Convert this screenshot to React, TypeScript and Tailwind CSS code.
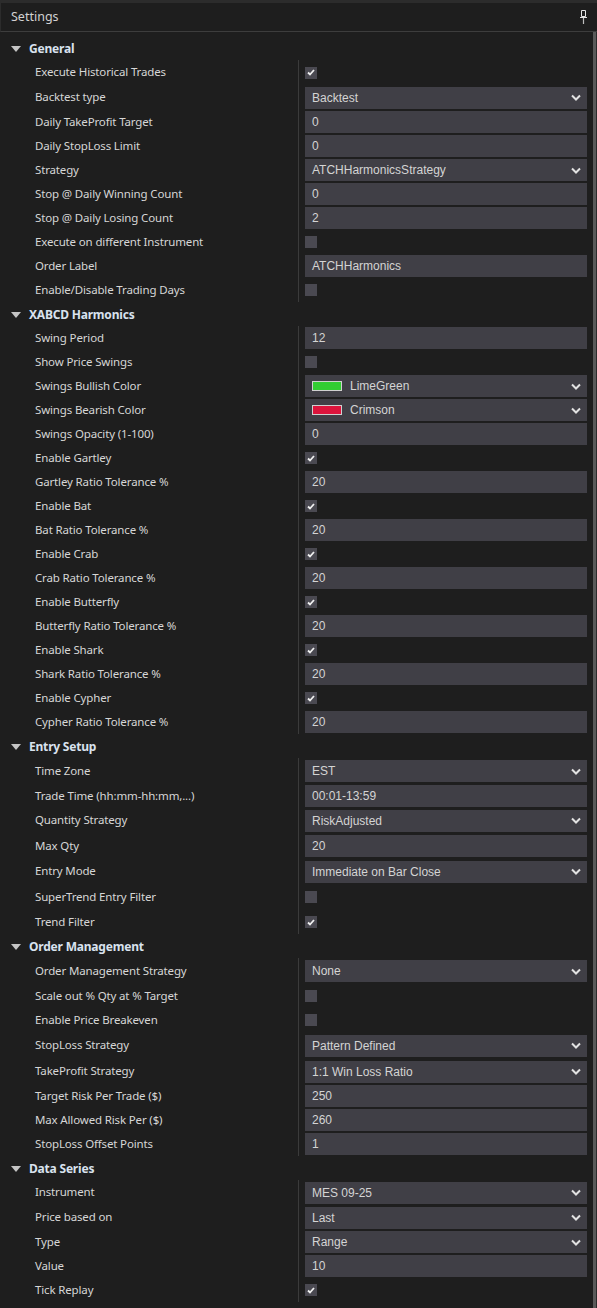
import { ReactNode } from 'react';

type Row =
  | { kind: 'header'; label: string; h: string }
  | { kind: 'check'; label: string; on: boolean; h: string }
  | { kind: 'select'; label: string; value: string; h: string }
  | { kind: 'text'; label: string; value: string; h: string }
  | { kind: 'color'; label: string; value: string; swatch: string; h: string };

const rows: Row[] = [
  { kind: 'header', label: 'General', h: 'h-[24px]' },
  { kind: 'check', label: 'Execute Historical Trades', on: true, h: 'h-[25px]' },
  { kind: 'select', label: 'Backtest type', value: 'Backtest', h: 'h-[25px]' },
  { kind: 'text', label: 'Daily TakeProfit Target', value: '0', h: 'h-[24px]' },
  { kind: 'text', label: 'Daily StopLoss Limit', value: '0', h: 'h-[24px]' },
  { kind: 'select', label: 'Strategy', value: 'ATCHHarmonicsStrategy', h: 'h-[24px]' },
  { kind: 'text', label: 'Stop @ Daily Winning Count', value: '0', h: 'h-[24px]' },
  { kind: 'text', label: 'Stop @ Daily Losing Count', value: '2', h: 'h-[24px]' },
  { kind: 'check', label: 'Execute on different Instrument', on: false, h: 'h-[24px]' },
  { kind: 'text', label: 'Order Label', value: 'ATCHHarmonics', h: 'h-[24px]' },
  { kind: 'check', label: 'Enable/Disable Trading Days', on: false, h: 'h-[24px]' },
  { kind: 'header', label: 'XABCD Harmonics', h: 'h-[24px]' },
  { kind: 'text', label: 'Swing Period', value: '12', h: 'h-[24px]' },
  { kind: 'check', label: 'Show Price Swings', on: false, h: 'h-[24px]' },
  { kind: 'color', label: 'Swings Bullish Color', value: 'LimeGreen', swatch: 'bg-[#32cd32]', h: 'h-[24px]' },
  { kind: 'color', label: 'Swings Bearish Color', value: 'Crimson', swatch: 'bg-[#dc143c]', h: 'h-[24px]' },
  { kind: 'text', label: 'Swings Opacity (1-100)', value: '0', h: 'h-[24px]' },
  { kind: 'check', label: 'Enable Gartley', on: true, h: 'h-[24px]' },
  { kind: 'text', label: 'Gartley Ratio Tolerance %', value: '20', h: 'h-[24px]' },
  { kind: 'check', label: 'Enable Bat', on: true, h: 'h-[24px]' },
  { kind: 'text', label: 'Bat Ratio Tolerance %', value: '20', h: 'h-[24px]' },
  { kind: 'check', label: 'Enable Crab', on: true, h: 'h-[24px]' },
  { kind: 'text', label: 'Crab Ratio Tolerance %', value: '20', h: 'h-[24px]' },
  { kind: 'check', label: 'Enable Butterfly', on: true, h: 'h-[24px]' },
  { kind: 'text', label: 'Butterfly Ratio Tolerance %', value: '20', h: 'h-[24px]' },
  { kind: 'check', label: 'Enable Shark', on: true, h: 'h-[24px]' },
  { kind: 'text', label: 'Shark Ratio Tolerance %', value: '20', h: 'h-[24px]' },
  { kind: 'check', label: 'Enable Cypher', on: true, h: 'h-[24px]' },
  { kind: 'text', label: 'Cypher Ratio Tolerance %', value: '20', h: 'h-[24px]' },
  { kind: 'header', label: 'Entry Setup', h: 'h-[24px]' },
  { kind: 'select', label: 'Time Zone', value: 'EST', h: 'h-[26px]' },
  { kind: 'text', label: 'Trade Time (hh:mm-hh:mm,...)', value: '00:01-13:59', h: 'h-[24px]' },
  { kind: 'select', label: 'Quantity Strategy', value: 'RiskAdjusted', h: 'h-[25px]' },
  { kind: 'text', label: 'Max Qty', value: '20', h: 'h-[26px]' },
  { kind: 'select', label: 'Entry Mode', value: 'Immediate on Bar Close', h: 'h-[25px]' },
  { kind: 'check', label: 'SuperTrend Entry Filter', on: false, h: 'h-[26px]' },
  { kind: 'check', label: 'Trend Filter', on: true, h: 'h-[24px]' },
  { kind: 'header', label: 'Order Management', h: 'h-[24px]' },
  { kind: 'select', label: 'Order Management Strategy', value: 'None', h: 'h-[26px]' },
  { kind: 'check', label: 'Scale out % Qty at % Target', on: false, h: 'h-[24px]' },
  { kind: 'check', label: 'Enable Price Breakeven', on: false, h: 'h-[24px]' },
  { kind: 'select', label: 'StopLoss Strategy', value: 'Pattern Defined', h: 'h-[27px]' },
  { kind: 'select', label: 'TakeProfit Strategy', value: '1:1 Win Loss Ratio', h: 'h-[25px]' },
  { kind: 'text', label: 'Target Risk Per Trade ($)', value: '250', h: 'h-[24px]' },
  { kind: 'text', label: 'Max Allowed Risk Per ($)', value: '260', h: 'h-[24px]' },
  { kind: 'text', label: 'StopLoss Offset Points', value: '1', h: 'h-[24px]' },
  { kind: 'header', label: 'Data Series', h: 'h-[24px]' },
  { kind: 'select', label: 'Instrument', value: 'MES 09-25', h: 'h-[25px]' },
  { kind: 'select', label: 'Price based on', value: 'Last', h: 'h-[25px]' },
  { kind: 'select', label: 'Type', value: 'Range', h: 'h-[24px]' },
  { kind: 'text', label: 'Value', value: '10', h: 'h-[24px]' },
  { kind: 'check', label: 'Tick Replay', on: true, h: 'h-[24px]' },
];

const labelFont = "font-['Noto_Sans',sans-serif]";
const valueFont = "font-['Liberation_Sans',Arial,sans-serif]";

function Chevron() {
  return (
    <svg width="10" height="7" viewBox="0 0 10 7" className="shrink-0">
      <path d="M1 1.5 L5 5.5 L9 1.5" fill="none" stroke="#e2e2e2" strokeWidth="2" />
    </svg>
  );
}

function Box({ children }: { children: ReactNode }) {
  return (
    <div className={`h-[22px] flex items-center bg-[#403f46] pl-[7px] pr-[6px] text-[12px] text-[#d4d4d4] ${valueFont}`}>
      {children}
    </div>
  );
}

function CheckBox({ on }: { on: boolean }) {
  return (
    <div className="w-[12px] h-[12px] bg-[#4a4951] flex items-center justify-center">
      {on && (
        <svg width="8" height="7" viewBox="0 0 8 7">
          <path d="M1 3.5 L3 5.5 L7 1" fill="none" stroke="#f0f0f0" strokeWidth="1.8" />
        </svg>
      )}
    </div>
  );
}

function Value({ row }: { row: Row }) {
  switch (row.kind) {
    case 'check':
      return <CheckBox on={row.on} />;
    case 'select':
      return (
        <Box>
          <span className="flex-1">{row.value}</span>
          <Chevron />
        </Box>
      );
    case 'color':
      return (
        <Box>
          <span className={`w-[30px] h-[10px] border border-[#d0d0d0] mr-[8px] ${row.swatch}`} />
          <span className="flex-1">{row.value}</span>
          <Chevron />
        </Box>
      );
    case 'text':
      return (
        <Box>
          <span>{row.value}</span>
        </Box>
      );
    default:
      return null;
  }
}

function PropertyRow({ row }: { row: Row }) {
  if (row.kind === 'header') {
    return (
      <div className={`${row.h} flex items-center pt-[2px]`}>
        <svg width="10" height="6" viewBox="0 0 10 6" className="ml-[11px] mr-[8px]">
          <path d="M0 0 L10 0 L5 6 Z" fill="#c4c4c4" />
        </svg>
        <span className={`text-[12px] font-bold text-[#d9e2ee] tracking-[-0.2px] ${labelFont}`}>{row.label}</span>
      </div>
    );
  }
  return (
    <div className={`${row.h} flex items-stretch`}>
      <div className={`w-[298px] shrink-0 flex items-center pl-[35px] pb-[1px] text-[11.5px] tracking-[-0.15px] text-[#d6d6d6] ${labelFont}`}>
        {row.label}
      </div>
      <div className="flex-1 border-l border-[#3b3b3b] pl-[6px] pr-[6px] flex flex-col justify-center">
        <Value row={row} />
      </div>
    </div>
  );
}

export default function App() {
  return (
    <div className="w-[597px] h-[1308px] bg-[#1e1e1e] flex flex-col overflow-hidden border-t-[3px] border-[#2c2c2c]">
      <div className="h-[29px] shrink-0 flex items-center justify-between border-b border-[#3d3d3d] border-l border-l-[#2c2c2c] pl-[10px] pr-[10px]">
        <span className={`text-[12.5px] text-[#d2d2d2] ${labelFont}`}>Settings</span>
        <svg width="7" height="14" viewBox="0 0 7 14">
          <path d="M1.5 0.5 H5.5 V6.5 H1.5 Z" fill="none" stroke="#e4e4e4" strokeWidth="1" />
          <path d="M0 7.5 H7" stroke="#e4e4e4" strokeWidth="1" />
          <path d="M3.5 8 V14" stroke="#bdbdbd" strokeWidth="1.2" />
        </svg>
      </div>
      <div className="flex-1 flex">
        <div className="flex-1 pt-[4px] flex flex-col">
          {rows.map((row) => (
            <PropertyRow key={row.label} row={row} />
          ))}
        </div>
        <div className="w-[4px] flex">
          <div className="w-[3px] bg-[#5a5a5a]" />
          <div className="w-[1px] bg-[#2c2c2c]" />
        </div>
      </div>
    </div>
  );
}
